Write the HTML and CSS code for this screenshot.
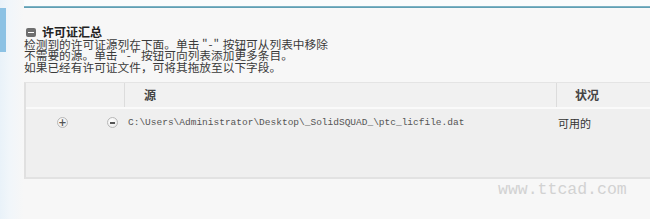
FILE: index.html
```html
<!DOCTYPE html>
<html lang="zh">
<head>
<meta charset="utf-8">
<link rel="stylesheet" href="styles.css">
</head>
<body>
<div class="page">
  <aside class="sidebar"><div class="tab"></div></aside>
  <main class="main">
    <div class="rule"></div>
    <section class="section">
      <h2 class="title"><span class="collapse"></span>许可证汇总</h2>
      <div class="desc">
        <div>检测到的许可证源列在下面。单击 <span class="q">"-"</span> 按钮可从列表中移除</div>
        <div>不需要的源。单击 <span class="q">"-"</span> 按钮可向列表添加更多条目。</div>
        <div class="gap">如果已经有许可证文件，可将其拖放至以下字段。</div>
      </div>
      <div class="table">
        <div class="thead">
          <div class="th"></div>
          <div class="th src">源</div>
          <div class="th status">状况</div>
        </div>
        <div class="tbody">
          <div class="row">
            <div class="ops">
              <span class="btn plus">+</span>
              <span class="btn minus"></span>
            </div>
            <div class="path">C:\Users\Administrator\Desktop\_SolidSQUAD_\ptc_licfile.dat</div>
            <div class="state">可用的</div>
          </div>
        </div>
      </div>
      <div class="watermark">www.ttcad.com</div>
    </section>
  </main>
</div>
</body>
</html>
```
FILE: styles.css
```css
html, body {
  margin: 0;
  padding: 0;
  width: 650px;
  height: 219px;
  overflow: hidden;
  background: #f7f7f7;
  font-family: "Noto Sans CJK SC", "Noto Sans", sans-serif;
  color: #333;
}
.page {
  display: flex;
  height: 219px;
}
.sidebar {
  width: 24px;
  flex: none;
  background: linear-gradient(to right, #e9f2f9 0%, #f1f6fa 40%, #f7f7f7 100%);
}
.tab {
  margin-top: 8px;
  width: 6px;
  height: 44px;
  background: #8cc2e4;
}
.main {
  flex: 1;
  min-width: 0;
  background: linear-gradient(to bottom, #fafcfd 0px, #fafcfd 6px, #f7f7f7 10px);
}
.rule {
  margin-top: 6px;
  height: 2px;
  background: linear-gradient(to bottom, #8bbccc 0, #5296ac 100%);
}
.section {
  padding-top: 17px;
}
.title {
  margin: 0 0 0 2px;
  display: flex;
  align-items: center;
  gap: 6px;
  font-size: 12px;
  line-height: 14px;
  font-weight: bold;
  color: #222;
}
.collapse {
  width: 10px;
  height: 9px;
  border-radius: 2px;
  background: #6f6f6f;
  position: relative;
}
.collapse::after {
  content: "";
  position: absolute;
  left: 2px;
  right: 2px;
  top: 4px;
  height: 1px;
  background: #fff;
}
.desc {
  font-size: 11.7px;
  line-height: 10.5px;
  color: #3a3a3a;
  white-space: nowrap;
}
.desc .q {
  letter-spacing: 1px;
}
.desc .gap {
  margin-top: 1.5px;
}
.table {
  margin-top: 10px;
  width: 640px;
  height: 97px;
  border-left: 2px solid #e0e0e0;
  border-top: 1px solid #e4e4e4;
  border-bottom: 2px solid #e2e2e2;
  background: #efefef;
  box-sizing: border-box;
}
.thead {
  display: grid;
  grid-template-columns: 98px 432px 1fr;
  height: 24px;
  background: #f1f1f1;
  border-bottom: 2px solid #fafafa;
}
.th {
  font-size: 12px;
  font-weight: bold;
  color: #444;
  line-height: 24px;
}
.th.src {
  border-left: 1px solid #dcdcdc;
  padding-left: 19px;
}
.th.status {
  border-left: 1px solid #dcdcdc;
  padding-left: 18px;
}
.row {
  display: grid;
  grid-template-columns: 102px 430px 1fr;
  height: 27px;
  align-items: center;
}
.ops {
  display: flex;
  align-items: center;
  padding-left: 31px;
  gap: 39px;
}
.btn {
  width: 9px;
  height: 9px;
  border-radius: 50%;
  border: 1px solid #b8b8b8;
  background: radial-gradient(circle at 40% 35%, #ffffff 0%, #e6e6e6 100%);
  font-family: "DejaVu Sans", sans-serif;
  font-size: 10px;
  font-weight: bold;
  line-height: 9px;
  text-align: center;
  color: #555;
  position: relative;
}
.btn.minus::after {
  content: "";
  position: absolute;
  left: 2px;
  right: 2px;
  top: 4px;
  height: 1.5px;
  background: #555;
}
.path {
  font-family: "Liberation Mono", monospace;
  font-size: 9.5px;
  color: #555;
  white-space: nowrap;
}
.state {
  font-size: 11px;
  color: #333;
}
.watermark {
  margin-top: 2px;
  padding-left: 474px;
  font-family: "Liberation Mono", monospace;
  font-size: 16.5px;
  line-height: 18px;
  color: #d2d2d2;
  white-space: nowrap;
}
```
